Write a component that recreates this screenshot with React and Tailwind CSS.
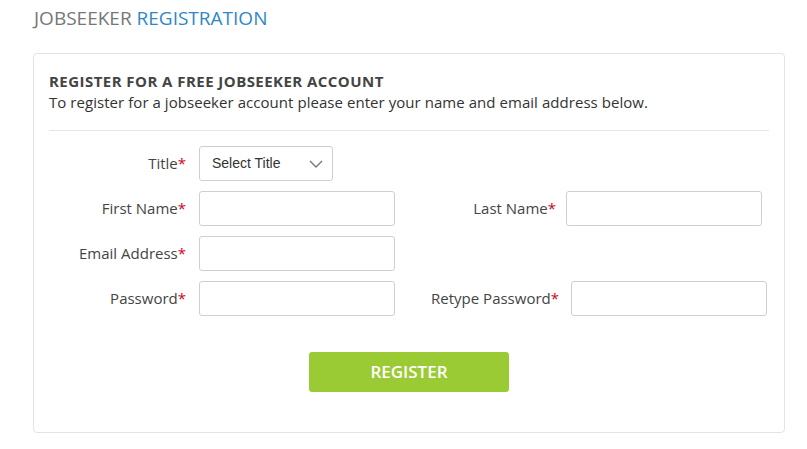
const font = { fontFamily: '"Open Sans", "Noto Sans", sans-serif' };

function Label({ children, className = '' }) {
  return (
    <label className={`shrink-0 text-right text-[15px] text-[#444] ${className}`}>
      {children}
      <span className="text-[#d0021b]">*</span>
    </label>
  );
}

function Field({ className = '' }) {
  return (
    <input
      type="text"
      className={`h-[35px] w-[196px] shrink-0 rounded-[3px] border border-[#cfcfcf] bg-white px-2 text-[14px] outline-none ${className}`}
    />
  );
}

export default function App() {
  return (
    <div className="min-h-[449px] w-[807px] bg-white" style={font}>
      <h1 className="pl-[34px] pt-[6px] text-[19px] leading-[24px] text-[#777]">
        JOBSEEKER <span className="text-[#2f87c9]">REGISTRATION</span>
      </h1>

      <div className="ml-[33px] mt-[23px] w-[752px] rounded-[4px] border border-[#e3e3e3] px-[15px] pb-[40px] pt-[17px]">
        <h2 className="text-[15px] font-bold leading-[21px] tracking-[0.45px] text-[#444]">
          REGISTER FOR A FREE JOBSEEKER ACCOUNT
        </h2>
        <p className="text-[15px] leading-[21px] text-[#333] tracking-[0.05px]">
          To register for a jobseeker account please enter your name and email address below.
        </p>
        <div className="mt-[17px] h-px w-[720px] bg-[#e5e5e5]" />

        <div className="mt-[15px] flex flex-col gap-[10px]">
          <div className="flex items-center">
            <Label className="w-[137px]">Title</Label>
            <div className="relative ml-[13px] flex h-[35px] w-[134px] items-center rounded-[3px] border border-[#cfcfcf] pl-[12px]">
              <span className="text-[14px] text-[#333]" style={{ fontFamily: '"Liberation Sans", Arial, sans-serif' }}>
                Select Title
              </span>
              <svg className="absolute right-[9px] top-[13px]" width="14" height="8" viewBox="0 0 14 8" fill="none">
                <polyline points="1,1 7,7 13,1" stroke="#777" strokeWidth="1.4" />
              </svg>
            </div>
          </div>

          <div className="flex items-center">
            <Label className="w-[137px]">First Name</Label>
            <Field className="ml-[13px]" />
            <Label className="w-[161px]">Last Name</Label>
            <Field className="ml-[10px]" />
          </div>

          <div className="flex items-center">
            <Label className="w-[137px]">Email Address</Label>
            <Field className="ml-[13px]" />
          </div>

          <div className="flex items-center">
            <Label className="w-[137px]">Password</Label>
            <Field className="ml-[13px]" />
            <Label className="w-[164px]">Retype Password</Label>
            <Field className="ml-[12px]" />
          </div>
        </div>

        <div className="mt-[36px] flex justify-center">
          <button className="h-[40px] w-[200px] rounded-[3px] bg-[#9bcb34] text-[17px] font-semibold text-white">
            REGISTER
          </button>
        </div>
      </div>
    </div>
  );
}
